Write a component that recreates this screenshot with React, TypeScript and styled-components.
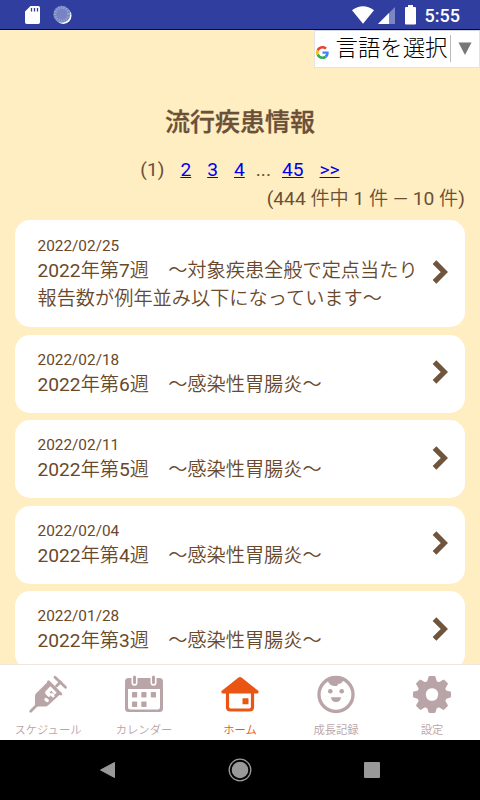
import React from 'react';
import styled, { createGlobalStyle } from 'styled-components';

const GlobalStyle = createGlobalStyle`
  *, *::before, *::after { box-sizing: border-box; }
  body {
    margin: 0;
    font-family: Roboto, "Noto Sans CJK JP DemiLight", "Noto Sans CJK JP", sans-serif;
    color: #6b4f36;
  }
`;

const Screen = styled.div`
  display: flex;
  flex-direction: column;
  width: 480px;
  height: 800px;
  overflow: hidden;
  background: #feeec2;
`;

const StatusBar = styled.header`
  display: flex;
  align-items: center;
  flex: none;
  height: 30px;
  padding: 0 20px 0 23px;
  background: #303f9f;
  border-bottom: 1px solid #000080;
  svg { display: block; flex: none; }
`;

const StatusGroup = styled.div<{ $gap: number; $end?: boolean }>`
  display: flex;
  align-items: center;
  gap: ${(p) => p.$gap}px;
  margin-left: ${(p) => (p.$end ? 'auto' : '0')};
  padding-top: 1px;
`;

const BatteryWrap = styled.span`
  margin-left: 6px;
`;

const Clock = styled.span`
  margin-left: 5px;
  font-size: 18px;
  font-weight: 500;
  line-height: 28px;
  color: #fff;
  padding-top: 2px;
`;

const Content = styled.main`
  flex: 1;
  min-height: 0;
  overflow: hidden;
  padding: 0 15px;
`;

const LanguageButton = styled.button`
  display: flex;
  align-items: center;
  width: 166px;
  height: 38px;
  margin: 0 -15px 0 auto;
  padding: 0 0 0 1px;
  border: 1px solid #e3e3e3;
  border-top-color: #d5d5d5;
  background: #fff;
  color: #000;
  font: 300 22.4px/34px Roboto, "Noto Sans CJK JP", sans-serif;
  svg { display: block; flex: none; }
`;

const GoogleMark = styled.span`
  margin-top: 7px;
`;

const LanguageLabel = styled.span`
  margin: -3px 0 0 6.5px;
  white-space: nowrap;
`;

const LanguageDivider = styled.span`
  width: 1px;
  height: 27px;
  margin: -2px 7px 0 3px;
  background: #bbb;
`;

const Title = styled.h1`
  margin: 33px 0 0;
  font-family: "Noto Sans CJK JP", sans-serif;
  font-size: 25px;
  line-height: 38px;
  font-weight: 500;
  -webkit-text-stroke: 0.3px currentColor;
  text-align: center;
`;

const Pager = styled.nav`
  display: flex;
  justify-content: center;
  margin-top: 17px;
  font-size: 19.2px;
  line-height: 28.8px;
`;

const PageLink = styled.a<{ $left?: number }>`
  margin-left: ${(p) => p.$left ?? 16}px;
  color: #0000ee;
  text-decoration: underline;
`;

const Ellipsis = styled.span`
  margin-left: 11px;
`;

const Count = styled.p`
  margin: 0 0 6.9px;
  font-size: 19.2px;
  line-height: 28.8px;
  text-align: right;
`;

const List = styled.ul`
  display: flex;
  flex-direction: column;
  gap: 7.5px;
  margin: 0;
  padding: 0;
  list-style: none;
`;

const Card = styled.li`
  display: flex;
  align-items: center;
  justify-content: space-between;
  min-height: 78px;
  padding: 14.2px 17px 12.8px 22.5px;
  border-radius: 15px;
  background: #fff;
  svg { display: block; flex: none; margin-top: -4px; }
`;

const CardText = styled.div`
  width: 384px;
  color: #69492b;
`;

const CardDate = styled.div`
  font-size: 15.36px;
  line-height: 22px;
`;

const CardTitle = styled.div`
  font-size: 19.2px;
  line-height: 28.8px;
`;

const TabBar = styled.nav`
  display: grid;
  grid-template-columns: repeat(5, 1fr);
  flex: none;
  height: 76px;
  border-top: 1px solid #f2e6e0;
  background: #fff;
`;

const Tab = styled.a<{ $active?: boolean }>`
  display: flex;
  flex-direction: column;
  align-items: center;
  padding-top: 9px;
  color: ${(p) => (p.$active ? '#ea5514' : '#b9a4a7')};
  svg { display: block; }
`;

const TabLabel = styled.span`
  margin-top: 8.5px;
  font-size: 11.3px;
  line-height: 16px;
  white-space: nowrap;
`;

const SystemBar = styled.footer`
  display: grid;
  grid-template-columns: repeat(3, 132px);
  justify-content: center;
  align-items: center;
  justify-items: center;
  flex: none;
  height: 60px;
  background: #000;
  svg { display: block; }
`;

const Chevron = () => (
  <svg width="18" height="26" viewBox="0 0 18 26" fill="none">
    <path d="M4.500 3.200L14.300 13L4.500 22.800" stroke="#70543b" strokeWidth="5.200" />
  </svg>
);

const SdCardIcon = () => (
  <svg width="18" height="20" viewBox="0 0 18 20">
    <path d="M7.500 1h7.700a1.800 1.800 0 0 1 1.800 1.800v14.400a1.800 1.800 0 0 1-1.800 1.800H3.800A1.800 1.800 0 0 1 2 17.200V6.500z" fill="#fff" />
    <path d="M8.500 3v3.500M11.500 3v3.500M14.500 3v3.500" stroke="#303f9f" strokeWidth="1.300" />
  </svg>
);

const SyncIcon = () => (
  <svg width="20" height="20" viewBox="0 0 20 20">
    <circle cx="11.300" cy="10.800" r="8.200" fill="#fff" />
    <circle cx="9.800" cy="9.200" r="8.500" fill="#7784c3" />
    <circle cx="9.800" cy="9.200" r="6.600" fill="none" stroke="#a0a9d6" strokeWidth="2.400" strokeDasharray="1 1.500" />
  </svg>
);

const WifiIcon = () => (
  <svg width="22" height="18" viewBox="0 0 22 18">
    <path d="M0 4.200Q11-3.600 22 4.200L11 17.800Z" fill="#fff" />
  </svg>
);

const SignalIcon = () => (
  <svg width="17" height="17" viewBox="0 0 17 17">
    <path d="M0 17L17 0V17Z" fill="#7b86c4" />
    <path d="M0 17L11 6V17Z" fill="#fff" />
  </svg>
);

const BatteryIcon = () => (
  <svg width="11" height="20" viewBox="0 0 11 20">
    <path d="M3 0h5v2h2q1 0 1 1v15.500q0 1-1 1H1q-1 0-1-1V3q0-1 1-1h2z" fill="#fff" />
  </svg>
);

const GoogleIcon = () => (
  <svg width="13" height="13" viewBox="0 0 48 48">
    <path fill="#ea4335" d="M24 9.500c3.540 0 6.710 1.220 9.210 3.600l6.850-6.850C35.900 2.380 30.470 0 24 0 14.620 0 6.510 5.380 2.560 13.220l7.980 6.190C12.430 13.720 17.740 9.500 24 9.500z" />
    <path fill="#4285f4" d="M46.980 24.550c0-1.570-.15-3.090-.38-4.550H24v9.020h12.940c-.58 2.960-2.260 5.480-4.780 7.180l7.730 6c4.510-4.180 7.090-10.360 7.090-17.650z" />
    <path fill="#fbbc05" d="M10.530 28.590c-.48-1.450-.76-2.990-.76-4.590s.27-3.140.76-4.590l-7.980-6.190C.92 16.460 0 20.120 0 24s.92 7.540 2.560 10.780l7.970-6.190z" />
    <path fill="#34a853" d="M24 48c6.480 0 11.930-2.130 15.890-5.810l-7.730-6c-2.150 1.450-4.920 2.300-8.160 2.300-6.260 0-11.570-4.220-13.470-9.910l-7.980 6.190C6.510 42.620 14.620 48 24 48z" />
  </svg>
);

const DropArrow = () => (
  <svg width="14" height="14" viewBox="0 0 14 14">
    <path d="M.5.500h13L7 13z" fill="#777" />
  </svg>
);

const SyringeIcon = () => (
  <svg width="40" height="40" viewBox="0 0 40 40" fill="none" stroke="currentColor" strokeLinecap="round">
    <path d="M2.700 37.300L9.500 30.500M28.500 12L32.500 8" strokeWidth="2.800" />
    <path d="M27 3.200L37.500 13.200" strokeWidth="2.800" />
    <path d="M20.500 7.800L32.800 20" strokeWidth="2.800" />
    <path d="M20 7.500L8 19.500Q7 20.500 7 22V32.500H17.500Q19 32.500 20 31.500L33 19.500Z" fill="currentColor" stroke="none" />
    <path d="M22.300 12.300L28.700 18.500L24.500 22.500L17 18Z" fill="#fff" stroke="none" />
    <path d="M22.500 17.500L25 20.500" strokeWidth="2.200" strokeLinecap="butt" />
    <path d="M24 20.500L25 22" stroke="#fff" strokeWidth="3" />
    <path d="M18 25.500L19.200 26.500" stroke="#fff" strokeWidth="3.400" />
    <path d="M18.500 19L21 21.500" stroke="#fff" strokeWidth="2.800" />
  </svg>
);

const CalendarIcon = () => (
  <svg width="40" height="40" viewBox="0 0 40 40">
    <path fill="currentColor" fillRule="evenodd" d="M4.500 4h31q3.500 0 3.500 3.500v27q0 3.500-3.500 3.500h-31Q1 38 1 34.500v-27Q1 4 4.500 4zM4 15v18Q4 35.500 6.500 35.500h27q2.500 0 2.500-2.500V15z" />
    <path d="M10.500 4v4.700M29.500 4v4.700" stroke="#fff" strokeWidth="6" strokeLinecap="round" />
    <path d="M10.500 3v5.500M29.500 3v5.500" stroke="currentColor" strokeWidth="3" strokeLinecap="round" />
    <g fill="currentColor">
      <rect x="8" y="18" width="5.200" height="5.500" rx=".7" />
      <rect x="17.300" y="18" width="5.200" height="5.500" rx=".7" />
      <rect x="26.800" y="18" width="5.200" height="5.500" rx=".7" />
      <rect x="8" y="27.500" width="5.200" height="5.500" rx=".7" />
      <rect x="17.300" y="27.500" width="5.200" height="5.500" rx=".7" />
    </g>
  </svg>
);

const HomeIcon = () => (
  <svg width="40" height="40" viewBox="0 0 40 40">
    <path d="M18.500 3.500Q20 2.300 21.500 3.500L38.200 16.800Q39.500 18.500 37.500 19.500H2.500Q.5 18.500 1.800 16.800Z" fill="currentColor" />
    <path d="M7.500 17.500V33Q7.500 36 10.500 36H29.500Q32.500 36 32.500 33V17.500" fill="none" stroke="currentColor" strokeWidth="3.200" />
    <rect x="22.500" y="24.300" width="6" height="6" rx=".6" fill="currentColor" />
  </svg>
);

const BabyIcon = () => (
  <svg width="40" height="40" viewBox="0 0 40 40">
    <circle cx="20" cy="20.500" r="17" fill="none" stroke="currentColor" strokeWidth="3.300" />
    <path d="M11.500 6.500Q14 12.800 20.500 12Q22.500 11.500 22 9.800Q26 10.500 27.500 5.500Q20 1 11.500 6.500Z" fill="currentColor" />
    <circle cx="14.300" cy="17.300" r="2.300" fill="currentColor" />
    <circle cx="25.700" cy="17.300" r="2.300" fill="currentColor" />
    <path d="M15 23.300H25Q24.800 28 20 28T15 23.300Z" fill="currentColor" />
  </svg>
);

const GearIcon = () => (
  <svg width="40" height="40" viewBox="0 0 40 40">
    <path
      fill="currentColor"
      stroke="currentColor"
      strokeWidth="2"
      strokeLinejoin="round"
      fillRule="evenodd"
      d="M17.500 3h5L24 8l3 1.300L31.700 6.600l3.200 3.200L32.200 14.500L33.500 17.500L38 18.500v4L33.500 24L32.200 27L34.900 31.500L31.500 34.900L27 32.200L24 33.500L22.500 38h-5L16 33.500L13 32.200L8.500 34.900L5.100 31.500L7.800 27L6.500 24L2 22.500v-4L6.500 17.500L7.800 14.500L5.100 9.800L8.300 6.600L13 9.300L16 8zM20 13.200a7.300 7.300 0 1 0 .01 0z"
    />
  </svg>
);

const entries = [
  { date: '2022/02/25', title: '2022年第7週　～対象疾患全般で定点当たり報告数が例年並み以下になっています～' },
  { date: '2022/02/18', title: '2022年第6週　～感染性胃腸炎～' },
  { date: '2022/02/11', title: '2022年第5週　～感染性胃腸炎～' },
  { date: '2022/02/04', title: '2022年第4週　～感染性胃腸炎～' },
  { date: '2022/01/28', title: '2022年第3週　～感染性胃腸炎～' },
];

const tabs = [
  { label: 'スケジュール', Icon: SyringeIcon },
  { label: 'カレンダー', Icon: CalendarIcon },
  { label: 'ホーム', Icon: HomeIcon, active: true },
  { label: '成長記録', Icon: BabyIcon },
  { label: '設定', Icon: GearIcon },
];

export default function App() {
  return (
    <Screen lang="ja">
      <GlobalStyle />
      <StatusBar>
        <StatusGroup $gap={11}>
          <SdCardIcon />
          <SyncIcon />
        </StatusGroup>
        <StatusGroup $gap={4} $end>
          <WifiIcon />
          <SignalIcon />
          <BatteryWrap>
            <BatteryIcon />
          </BatteryWrap>
          <Clock>5:55</Clock>
        </StatusGroup>
      </StatusBar>
      <Content>
        <LanguageButton>
          <GoogleMark>
            <GoogleIcon />
          </GoogleMark>
          <LanguageLabel>言語を選択</LanguageLabel>
          <LanguageDivider />
          <DropArrow />
        </LanguageButton>
        <Title>流行疾患情報</Title>
        <Pager>
          <span>(1)</span>
          <PageLink href="#2">2</PageLink>
          <PageLink href="#3">3</PageLink>
          <PageLink href="#4">4</PageLink>
          <Ellipsis>...</Ellipsis>
          <PageLink href="#45" $left={11}>45</PageLink>
          <PageLink href="#next">&gt;&gt;</PageLink>
        </Pager>
        <Count>(444 件中 1 件 — 10 件)</Count>
        <List>
          {entries.map((e) => (
            <Card key={e.date}>
              <CardText>
                <CardDate>{e.date}</CardDate>
                <CardTitle>{e.title}</CardTitle>
              </CardText>
              <Chevron />
            </Card>
          ))}
        </List>
      </Content>
      <TabBar>
        {tabs.map(({ label, Icon, active }) => (
          <Tab key={label} $active={active}>
            <Icon />
            <TabLabel>{label}</TabLabel>
          </Tab>
        ))}
      </TabBar>
      <SystemBar>
        <svg width="18" height="18" viewBox="0 0 18 18">
          <path d="M15.500 1.500V16.500L1.500 9Z" fill="#999" stroke="#999" strokeLinejoin="round" />
        </svg>
        <svg width="24" height="24" viewBox="0 0 24 24">
          <circle cx="12" cy="12" r="10.800" fill="none" stroke="#999" strokeWidth="1.300" />
          <circle cx="12" cy="12" r="8.300" fill="#999" />
        </svg>
        <svg width="16" height="16" viewBox="0 0 16 16">
          <rect width="16" height="16" rx="1" fill="#999" />
        </svg>
      </SystemBar>
    </Screen>
  );
}
